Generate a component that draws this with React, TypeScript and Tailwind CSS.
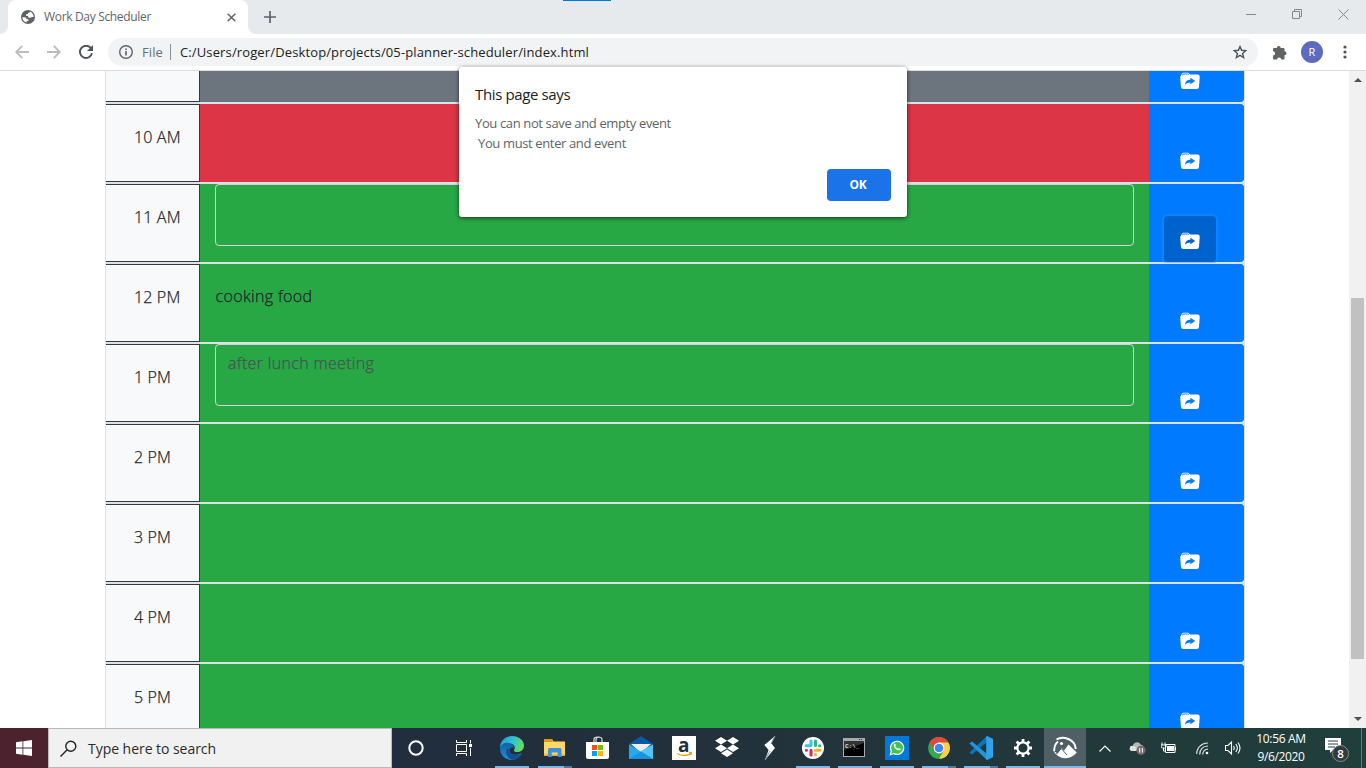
import type { ReactNode } from "react";

type Slot = { label: string; tone: "past" | "present" | "future"; text?: string; input?: boolean; active?: boolean };

const slots: Slot[] = [
  { label: "10 AM", tone: "present" },
  { label: "11 AM", tone: "future", input: true, active: true },
  { label: "12 PM", tone: "future", text: "cooking food" },
  { label: "1 PM", tone: "future", input: true, text: "after lunch meeting" },
  { label: "2 PM", tone: "future" },
  { label: "3 PM", tone: "future" },
  { label: "4 PM", tone: "future" },
  { label: "5 PM", tone: "future" },
];

const tones = { past: "bg-[#6c757d]", present: "bg-[#dc3545]", future: "bg-[#28a745]" };

function FolderIcon({ arrow }: { arrow: string }) {
  return (
    <svg width="20" height="18" viewBox="0 0 20 18" className="block shrink-0">
      <path d="M1 3.6 2 1.7Q2.5.8 3.5.8h4.2q.8 0 1.3.6l1.2 1.2h7.4q2.2 0 2.1 2.1l-.7 10.2q-.2 2-2.2 2H3.2q-2 0-2.200-2L.2 6.2Q.1 4.5 1 3.6Z" fill="#fff" />
      <path d="M2.3 3.2q.2-1.2 1.3-1.2h3.8q.6 0 1 .5l.5.5" fill="none" stroke={arrow} strokeWidth=".9" />
      <path d="M5 12.8c.2-3.2 2-5.1 5.4-5.1V5.8L15.2 9l-4.8 3.3v-1.9c-2.3 0-3.8.7-5.4 2.4Z" fill={arrow} />
    </svg>
  );
}

function Row({ slot }: { slot: Slot }) {
  return (
    <div className="flex h-20 shrink-0 border-y border-[#dee2e6]">
      <div className="w-[94px] border border-l-0 border-[#343a40] bg-[#f8f9fa] pl-7 pt-[20px] leading-6 tracking-[0.15px]">{slot.label}</div>
      <div className={`flex flex-1 rounded-r ${tones[slot.tone]}`}>
        <div className="w-[949px] px-[15px]">
          {slot.input ? (
            <div className="h-[62px] rounded border border-[#ced4da] px-3 pt-[6px] leading-6 tracking-[0.33px] text-[#495057]">{slot.text}</div>
          ) : (
            <div className="pl-[0.5px] pt-[20px] leading-6 tracking-[0.35px]">{slot.text}</div>
          )}
        </div>
        <div className="flex w-[94.5px] rounded-r bg-[#007bff] pl-[15px] pt-8">
          <div className={slot.active ? "flex h-[46px] w-[52px] justify-center rounded bg-[#0062cc] pt-[15.5px] ring-2 ring-[#268fff]/40" : "flex h-[46px] w-[52px] justify-center pt-[15.5px]"}>
            <FolderIcon arrow={slot.active ? "#0062cc" : "#007bff"} />
          </div>
        </div>
      </div>
    </div>
  );
}

function Browser() {
  return (
    <header className="flex h-[71px] shrink-0 flex-col border-b border-[#d9dbde] bg-white">
      <div className="relative flex h-[34px] bg-[#e6eaed]">
        <div className="absolute left-[563px] top-0 h-px w-12 bg-[#0078d7]" />
        <div className="flex w-2 items-end bg-[#e6eaed]">
          <div className="h-2 w-2 bg-white"><div className="h-2 w-2 rounded-br-lg bg-[#e6eaed]" /></div>
        </div>
        <div className="flex w-60 items-center rounded-t-lg bg-white pl-[13px] pr-[12px]">
          <svg width="14" height="14" viewBox="0 0 14 14" className="mr-[9px]">
            <circle cx="7" cy="7" r="7" fill="#5f6368" />
            <path d="M1.3 7.3h2.2c1.5 0 2.1.8 2.1 2h1.8v1.8H5.6v1.5C3.2 12 1.5 10 1.3 7.3Z" fill="#fff" />
            <path d="M8.7 1.6c2.3.8 3.8 2.8 3.9 5.4h-1.2c-1.1 0-1.5.8-2.7.8-1.2 0-1.7-.8-1.7-1.8H5.2V4h1.9V2.7h1.6Z" fill="#fff" />
          </svg>
          <span className="flex-1 whitespace-nowrap text-xs tracking-[-0.33px] text-[#5f6368]">Work Day Scheduler</span>
          <svg width="9" height="9" viewBox="0 0 9 9" stroke="#5f6368" strokeWidth="1.5"><path d="m.7.7 7.6 7.6M8.3.7.7 8.3" /></svg>
        </div>
        <div className="flex w-2 items-end">
          <div className="h-2 w-2 bg-white"><div className="h-2 w-2 rounded-bl-lg bg-[#e6eaed]" /></div>
        </div>
        <svg width="12" height="12" viewBox="0 0 12 12" className="ml-2 mt-[11px]" stroke="#5f6368" strokeWidth="1.7"><path d="M6 0v12M0 6h12" /></svg>
        <div className="ml-auto flex gap-9 pr-[17px] pt-[9px] text-[#85888b]">
          <svg width="10" height="11" viewBox="0 0 10 11" stroke="currentColor"><path d="M0 5.5h10" /></svg>
          <svg width="10" height="11" viewBox="0 0 10 11" fill="none" stroke="currentColor"><path d="M.5 2.5h7v7h-7zM2.5 2.5v-2h7v7h-2" /></svg>
          <svg width="11" height="11" viewBox="0 0 11 11" stroke="currentColor"><path d="m.5.5 10 10m0-10-10 10" /></svg>
        </div>
      </div>
      <div className="flex h-9 items-center pl-[15px]">
        <svg width="14" height="14" viewBox="0 0 14 14" fill="none" stroke="#babcbe" strokeWidth="1.8"><path d="M14 7H1.4M7.2.8 1.2 7l6 6.2" /></svg>
        <svg width="14" height="14" viewBox="0 0 14 14" fill="none" stroke="#babcbe" strokeWidth="1.8" className="ml-[18px]"><path d="M0 7h12.6M6.8.8l6 6.2-6 6.2" /></svg>
        <svg width="14" height="14" viewBox="0 0 14 14" fill="none" className="ml-[18px]"><path d="M11.8 3A6.1 6.1 0 1 0 13 8.3" stroke="#505459" strokeWidth="1.9" /><path d="M14 0v6H8Z" fill="#505459" /></svg>
        <div className="ml-[15px] flex h-7 w-[1150px] items-center rounded-full bg-[#f1f3f4] pl-[11px] pr-[11px]">
          <svg width="14" height="14" viewBox="0 0 14 14" fill="none" stroke="#5f6368" strokeWidth="1.4"><circle cx="7" cy="7" r="6.3" /><path d="M7 6v4.5M7 3.4v1.5" strokeWidth="1.6" /></svg>
          <span className="ml-[9px] w-[21px] whitespace-nowrap pt-px text-[13px] tracking-[0.1px] text-[#6b6f73]">File</span>
          <span className="ml-[7px] h-4 w-px bg-[#8b8e92]" />
          <span className="ml-[9px] flex-1 whitespace-nowrap pt-px text-[13px] tracking-[0.13px] text-[#202124]">C:/Users/roger/Desktop/projects/05-planner-scheduler/index.html</span>
          <svg width="14" height="14" viewBox="0 0 14 14" fill="none" stroke="#505459" strokeWidth="1.4"><path d="m7 1.5 1.6 3.8 4.2.4-3.2 2.7 1 4.1L7 10.3l-3.6 2.2 1-4.1L1.2 5.7l4.2-.4Z" /></svg>
        </div>
        <svg width="15" height="15" viewBox="0 0 15 15" className="ml-[14px]" fill="#5f6368"><path d="M4.700 3a2 2 0 0 1 4 0H11.500q1 0 1 1V6.200a2 2 0 0 1 0 4V13.500q0 1-1 1H9.300a2.100 2.100 0 0 0-4.200 0H2q-1 0-1-1v-3a2.100 2.100 0 0 0 0-4.200V4q0-1 1-1Z" /></svg>
        <div className="ml-[14px] flex h-[22px] w-[22px] items-center justify-center rounded-full bg-[#5c6bc0] text-[11px] text-white">R</div>
        <svg width="4" height="14" viewBox="0 0 4 14" fill="#505459" className="ml-[20px]"><circle cx="2" cy="2" r="1.6" /><circle cx="2" cy="7" r="1.6" /><circle cx="2" cy="12" r="1.6" /></svg>
      </div>
    </header>
  );
}

function Dialog() {
  return (
    <div className="absolute left-[459px] top-[67px] flex h-[150px] w-[448px] flex-col rounded-[3px] bg-white px-4 pb-4 pt-[16px] shadow-[0_1px_4px_rgba(0,0,0,0.65)]">
      <div className="text-[15px] leading-[22px] tracking-[-0.37px] text-[#202124]">This page says</div>
      <div className="mt-[8px] whitespace-pre text-[13px] leading-5 tracking-[-0.37px] text-[#5f6368]">{"You can not save and empty event\n You must enter and event"}</div>
      <div className="mt-auto flex h-8 w-16 items-center justify-center self-end rounded bg-[#1a73e8] pr-[2px] text-[12px] font-bold tracking-[-0.3px] text-white">OK</div>
    </div>
  );
}

function TaskIcon({ children, wide, line, more, on }: { children: ReactNode; wide?: boolean; line?: boolean; more?: boolean; on?: boolean }) {
  return (
    <div className={`flex h-10 shrink-0 flex-col items-center pt-2 ${wide ? "w-[43px]" : "w-[42px]"} ${on ? "bg-[#505e66]" : ""}`}>
      <svg width="24" height="24" viewBox="0 0 24 24" fill="none" className="shrink-0 overflow-visible">{children}</svg>
      {line && (
        <div className={`mt-[6px] flex h-[2px] shrink-0 ${on ? "w-full" : "w-[34px]"}`}>
          <div className="flex-1 bg-[#76b9ed]" />
          {more && <div className="w-2 bg-[#4c7ba1]" />}
        </div>
      )}
    </div>
  );
}

function Taskbar() {
  return (
    <footer className="flex h-10 shrink-0 bg-linear-to-r from-[#1e2a40] via-[#22303b] to-[#203f3b] text-white">
      <div className="flex w-12 items-center justify-center bg-[#4b222d]">
        <svg width="16" height="16" viewBox="0 0 16 16" fill="#fff"><path d="M0 2.2 6.500 1.300v6.300H0ZM7.300 1.200 16 0v7.600H7.300ZM0 8.400h6.500v6.300L0 13.800ZM7.300 8.400H16V16l-8.700-1.200Z" /></svg>
      </div>
      <div className="flex w-[344px] items-center border border-[#b9b9bb] bg-[#f1f1f1] pl-[11px] text-[#2b2b2b]">
        <svg width="17" height="17" viewBox="0 0 17 17" fill="none" stroke="#222" strokeWidth="1.400"><circle cx="10.800" cy="6.200" r="5" /><path d="M7.200 9.800.500 16.500" /></svg>
        <span className="ml-[11px] whitespace-nowrap text-[14px] tracking-[-0.04px]">Type here to search</span>
      </div>
      <div className="flex w-12 items-center justify-center">
        <svg width="16" height="16" viewBox="0 0 16 16" fill="none" stroke="#fff" strokeWidth="2"><circle cx="8" cy="8" r="6.700" /></svg>
      </div>
      <div className="flex w-[50px] items-center pl-4">
        <svg width="16" height="16" viewBox="0 0 16 16" fill="none" stroke="#fff" strokeWidth="1"><path d="M.5 0v2.500h10V0M.5 4.500h10v7H.5zM.5 16v-2.500h10V16M14.500 0v3.500M14.500 8v8" /><path d="M13 4h3v3h-3z" fill="#fff" stroke="none" /></svg>
      </div>
      <TaskIcon wide line>
        <defs>
          <linearGradient id="edgeTop" x1="0" y1="0" x2="24" y2="12" gradientUnits="userSpaceOnUse"><stop stopColor="#2496df" /><stop offset=".5" stopColor="#2fc3d1" /><stop offset="1" stopColor="#70e044" /></linearGradient>
          <linearGradient id="edgeLow" x1="0" y1="9" x2="0" y2="24" gradientUnits="userSpaceOnUse"><stop stopColor="#1565ad" /><stop offset="1" stopColor="#1c91df" /></linearGradient>
        </defs>
        <path d="M0 12C0 5 5 0 12 0c7 0 12 4.500 12 9.500 0 4-3 6.500-6.500 6.500-2.500 0-4-1-3.500-2 1.800-2.500.500-6-4-6.500C5 7 1 9 0 12Z" fill="url(#edgeTop)" />
        <path d="M0 12c1-4 5-6 9-5 3.500.800 5 3 5 5-2-2-5 0-4.500 3C10 19 16 20 21.500 17 22 19 17 24 12 24 5 24 0 19 0 12Z" fill="url(#edgeLow)" />
        <path d="M8 12c-4 4-1 11 5 12 4-.500 7.500-3 9-6.200-5 2.400-13 .700-12.500-4Z" fill="#14508f" />
      </TaskIcon>
      <TaskIcon wide line more>
        <path d="M1 3.500h8l1.500 2H22V20H1Z" fill="#ffd766" /><path d="M1 3h8.500v3H1Z" fill="#d99b12" /><path d="M1 18.500h21V20H1Z" fill="#e5a82b" />
        <path d="M5 21v-7.500Q5 12 6.500 12H17q1.500 0 1.500 1.500V21h-3.800v-4.500h-6V21Z" fill="#3c91d8" />
      </TaskIcon>
      <TaskIcon wide>
        <path d="M8 7V3.500Q8 1 12 1T16 3.500V7M10 7V4Q10 1 13 1" stroke="#ddd" strokeWidth="1.200" /><path d="M0 6h23v15q0 2-2 2H2q-2 0-2-2Z" fill="#fff" />
        <path d="M6 9h5v5H6Z" fill="#f25022" /><path d="M12 9h5v5h-5Z" fill="#7fba00" /><path d="M6 15h5v5H6Z" fill="#00a4ef" /><path d="M12 15h5v5h-5Z" fill="#ffb900" />
      </TaskIcon>
      <TaskIcon wide>
        <path d="M0 8 12 0l12 8v4H0Z" fill="#0c59a4" /><path d="M2 8h20l-10 9Z" fill="#eee" /><path d="M0 8.500 24 23H0Z" fill="#28a8ea" /><path d="M24 8.500V23L11 15.500Z" fill="#52c5f5" /><path d="M0 23 12 15.500 24 23Z" fill="#1793e0" />
      </TaskIcon>
      <TaskIcon wide>
        <path d="M0 0h24v24H0Z" fill="#fff" /><text x="11.800" y="15.500" textAnchor="middle" fontSize="19" fontWeight="700" fill="#222f3e" fontFamily="Open Sans">a</text>
        <path d="M5 17.500q7 3.800 13.500.400M17 16.700l2.500-.200-.800 2.400" stroke="#ff9900" strokeWidth="1.300" />
      </TaskIcon>
      <TaskIcon wide>
        <path d="m6 1 6 3.700-6 3.800L0 4.700ZM18 1l6 3.700-6 3.800-6-3.800ZM6 8.500l6 3.800L6 16l-6-3.700ZM18 8.500l6 3.800-6 3.700-6-3.700ZM12 13.500l6 3.800-6 3.700-6-3.700Z" fill="#fff" />
      </TaskIcon>
      <TaskIcon wide>
        <path d="M17 0 6.500 9l6 5.500-1.300-4.300Z" fill="#fff" /><path d="m12 5.500 5 6.500L7 24l3.600-10L6.500 9Z" fill="#fff" /><path d="M17 0 13 8M7 24l5-9" stroke="#8999a4" />
      </TaskIcon>
      <TaskIcon wide line>
        <circle cx="12" cy="12" r="11" fill="#fff" />
        <g strokeWidth="3" strokeLinecap="round"><path d="M10 5v4.500M5 9.800h4.500" stroke="#36c5f0" /><path d="M14.500 5v4.500M18.500 9.800h.2" stroke="#2eb67d" /><path d="M14.500 14.300H19M14.500 18.500v.2" stroke="#ecb22e" /><path d="M10 14.300V19M5.300 14.300h.2" stroke="#e01e5a" /></g>
      </TaskIcon>
      <TaskIcon line>
        <path d="M0 2h22v19H0Z" fill="#aaa" /><path d="M1 5h20v15H1Z" fill="#000" /><path d="M1 5h20v2L1 14Z" fill="#343434" /><text x="2" y="11.500" fontSize="6" fontWeight="700" fill="#ddd" fontFamily="Liberation Mono">C:\_</text><path d="M16 3.500h1m1 0h1" stroke="#333" />
      </TaskIcon>
      <TaskIcon line>
        <path d="M0 0h24v24H0Z" fill="#0078d7" /><path d="m4.500 19.500 1.200-4.300a7.200 7.200 0 1 1 2.900 3Z" fill="#fff" /><path d="m6.100 17.900.8-3a6 6 0 1 1 2.300 2.200Z" fill="#3fc351" />
        <path d="M9 8.200c.8-.8 1.500-.3 1.900 1.200l-.5.900q.900 1.700 2.700 2.500l1-.900c1.700.600 2 1.200 1.500 1.900-2.800 2.200-7.900-2.600-6.600-5.600Z" fill="#fff" />
      </TaskIcon>
      <TaskIcon line more>
        <circle cx="12" cy="12" r="10.800" fill="#34a853" /><path d="M2.600 6.600A10.800 10.800 0 0 1 21.400 6.600H12L7.300 14.700Z" fill="#dd4b3e" /><path d="M21.400 6.600A10.800 10.800 0 0 1 12 22.800l4.700-8.100L12 6.600Z" fill="#ffcd46" /><circle cx="12" cy="12" r="5.400" fill="#fff" /><circle cx="12" cy="12" r="4.300" fill="#4285f4" />
      </TaskIcon>
      <TaskIcon line more>
        <path d="M18 0v6L3 18.500.500 16.500Z" fill="#0876bf" /><path d="m.500 7.500 2.500-2L18 18v6Z" fill="#2494dc" /><path d="m18 0 6 2.800v18.400L18 24l-.800-.500V.500Z" fill="#30a2ea" />
      </TaskIcon>
      <TaskIcon line>
        <g stroke="#fff"><circle cx="12" cy="12" r="5.600" strokeWidth="2.200" /><path d="M12 3v3.500M12 17.500V21M3 12h3.500M17.500 12H21M5.600 5.600l2.500 2.500M15.900 15.900l2.500 2.500M5.600 18.400l2.500-2.500M15.900 8.100l2.500-2.500" strokeWidth="2.800" /></g>
      </TaskIcon>
      <TaskIcon line on>
        <path d="M3.500 3.500C10 -.5 22 3 22.800 13" stroke="#fff" strokeWidth="2" /><circle cx="8.500" cy="7.500" r="1.600" fill="#fff" />
        <path d="M0 14.500 4.500 17.500 8.500 12l2.500 2.800L15.500 8.500l8.300 8Q19 22.300 12 22.300T0 14.500Z" fill="#fff" /><path d="M3 18.500 8.300 12.500 14 19" stroke="#505e66" /><path d="M1.200 15Q1 9 5 5.500" stroke="#fff" strokeWidth="1.800" />
      </TaskIcon>
      <div className="flex w-[38px] items-center justify-center"><svg width="12" height="7" viewBox="0 0 12 7" fill="none" stroke="#fff" strokeWidth="1.200"><path d="m.5 6.500L6 1l5.500 5.500" /></svg></div>
      <div className="flex w-[27px] items-center justify-center">
        <svg width="17" height="14" viewBox="0 0 17 14"><path d="M4 6a4 4 0 0 1 7.500-2.500A3.500 3.500 0 0 1 13 10H3a2.500 2.500 0 0 1 0-4.500Z" fill="#b7b7b7" /><path d="M3 10a2.600 2.600 0 0 1 .5-5.200Q6 5 8 7l4 3Z" fill="#e2e2e2" /><circle cx="12" cy="9.300" r="4.600" fill="#766b69" /><path d="M10.700 7v4.600M13.300 7v4.600" stroke="#fff" /></svg>
      </div>
      <div className="flex w-9 items-center justify-center">
        <svg width="16" height="12" viewBox="0 0 16 12" fill="none" stroke="#fff"><path d="M4.500 2.500H14v8H4.500zM14.500 5v3.500M1 3V.500M4 3V.500M0 3h5v2L3.500 6h-2L0 5ZM2.500 6v3h2" /><path d="M6 4h7v5H6Z" fill="#fff" stroke="none" /></svg>
      </div>
      <div className="flex w-[30px] items-center justify-center">
        <svg width="13" height="13" viewBox="0 0 13 13" fill="none" stroke="#dce1e1" strokeWidth="1.200"><path d="M.7 12A11 11 0 0 1 12 1M3.700 12.500A8 8 0 0 1 12 4M6.700 12.500A5.500 5.500 0 0 1 12 7" /><circle cx="11" cy="11" r="1.300" fill="#fff" stroke="none" /></svg>
      </div>
      <div className="flex w-8 items-center justify-center">
        <svg width="16" height="14" viewBox="0 0 16 14" fill="none" stroke="#fff" strokeWidth="1.100"><path d="M.5 4.500H3L6.500 1v12L3 9.500H.500ZM8.500 5q1.500 2 0 4M10.800 3q3 4 0 8M13 1.500q4 5.500 0 11" /></svg>
      </div>
      <div className="w-16 pt-[2px] text-center text-xs leading-[18px] tracking-[-0.35px]"><div>10:56 AM</div><div>9/6/2020</div></div>
      <div className="flex w-12 items-center pl-3 pt-[3px]">
        <svg width="26" height="26" viewBox="0 0 26 26"><path d="M0 1h16v12H8l-3 3v-3H0Z" fill="#fff" /><path d="M3 4h10M3 7h10M3 10h7" stroke="#29413f" /><circle cx="15.500" cy="16.500" r="8" fill="#343a3b" stroke="#858b8b" /><text x="15.500" y="20.700" fontSize="11.500" fontWeight="600" textAnchor="middle" fill="#fff" fontFamily="Open Sans">8</text></svg>
      </div>
      <div className="w-[5px] border-l border-[#6a7c79]" />
    </footer>
  );
}

export default function App() {
  return (
    <div className="relative flex h-[768px] w-[1366px] flex-col overflow-hidden bg-white font-['Open_Sans','Noto_Sans',sans-serif]">
      <Browser />
      <main className="flex h-[657px] shrink-0 overflow-hidden">
        <div className="ml-[105px] flex w-[1140px] flex-col border-x border-[#dee2e6] text-base font-light text-[#212529] [-webkit-text-stroke:0.25px_currentColor]">
          <div className="flex h-8 shrink-0 border-b border-[#dee2e6]">
            <div className="w-[94px] border-b border-r border-[#343a40] bg-[#f8f9fa]" />
            <div className="flex flex-1 rounded-br bg-[#6c757d]">
              <div className="w-[949px]" />
              <div className="w-[94.5px] rounded-br bg-[#007bff] pl-[31px] pt-[0.5px]"><FolderIcon arrow="#007bff" /></div>
            </div>
          </div>
          {slots.map((slot) => <Row key={slot.label} slot={slot} />)}
        </div>
        <div className="ml-auto flex w-[17px] flex-col items-center bg-[#f1f1f1] pt-[7px]">
          <svg width="8" height="4" viewBox="0 0 8 4" className="shrink-0" fill="#505050"><path d="M0 4 4 0l4 4Z" /></svg>
          <div className="mt-[216px] h-[361px] w-[13px] shrink-0 bg-[#c1c1c1]" />
          <svg width="8" height="4" viewBox="0 0 8 4" className="mt-[58px] shrink-0" fill="#505050"><path d="M0 0 4 4l4-4Z" /></svg>
        </div>
      </main>
      <Taskbar />
      <Dialog />
    </div>
  );
}
